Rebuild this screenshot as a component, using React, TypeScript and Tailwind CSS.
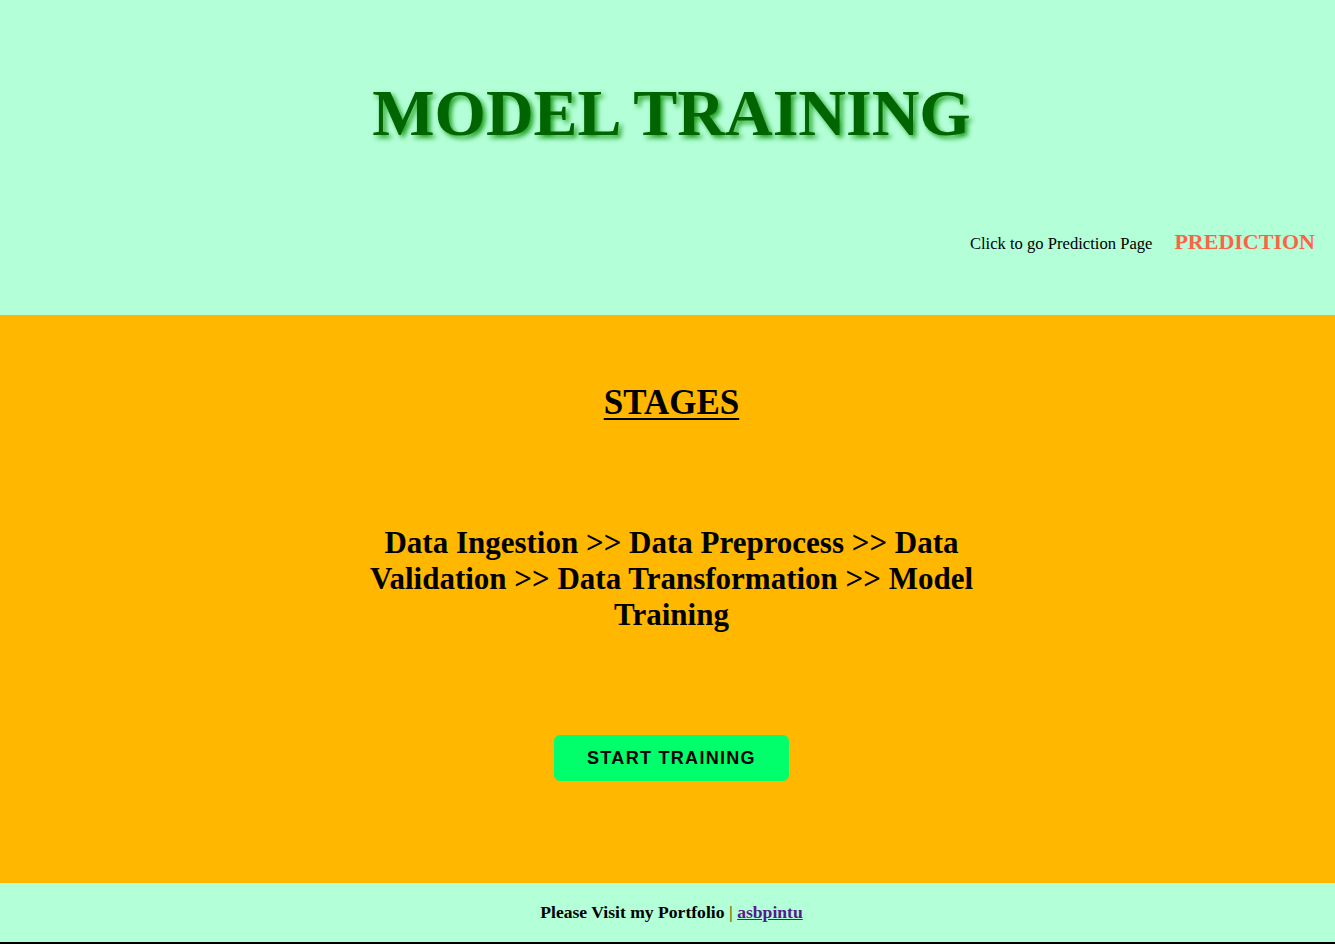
export default function App() {
  return (
    <div className="flex min-h-[944px] flex-col font-['Liberation_Serif',serif]">
      <header className="flex h-[315px] flex-col bg-[#b3ffd7]">
        <h1 className="pl-[8px] pt-[75px] text-center text-[66px] font-bold leading-[76px] text-[#006400] [text-shadow:3px_3px_5px_#1fa01f]">
          MODEL TRAINING
        </h1>
        <nav className="mt-[74px] flex items-baseline justify-end gap-[22px] pr-[20px]">
          <span className="text-[16.6px] text-black">Click to go Prediction Page</span>
          <a href="#" className="text-[22px] font-bold text-[#ff6347]">
            PREDICTION
          </a>
        </nav>
      </header>

      <main className="flex h-[568px] flex-col items-center bg-[#ffb700] pl-[8px]">
        <h2 className="mt-[68px] text-[35px] font-bold leading-[40px] text-black underline decoration-2 underline-offset-[4px]">
          STAGES
        </h2>
        <p className="mt-[102px] w-[612px] text-center text-[31px] font-bold leading-[36px] text-black">
          Data Ingestion &gt;&gt; Data Preprocess &gt;&gt; Data Validation &gt;&gt; Data
          Transformation &gt;&gt; Model Training
        </p>
        <button className="mt-[102px] h-[46px] w-[235px] rounded-[6px] bg-[#00ff6a] font-['Liberation_Sans',sans-serif] text-[18px] font-bold tracking-[1.3px] text-black">
          START TRAINING
        </button>
      </main>

      <footer className="flex h-[61px] items-center justify-center border-b-2 border-black bg-[#b3ffd7] pl-[8px] text-[17.6px] font-bold text-black">
        <span>
          Please Visit my Portfolio <span className="text-[#7a6e00]">|</span>{" "}
          <a href="#" className="text-[#551a8b] underline">
            asbpintu
          </a>
        </span>
      </footer>
    </div>
  );
}
